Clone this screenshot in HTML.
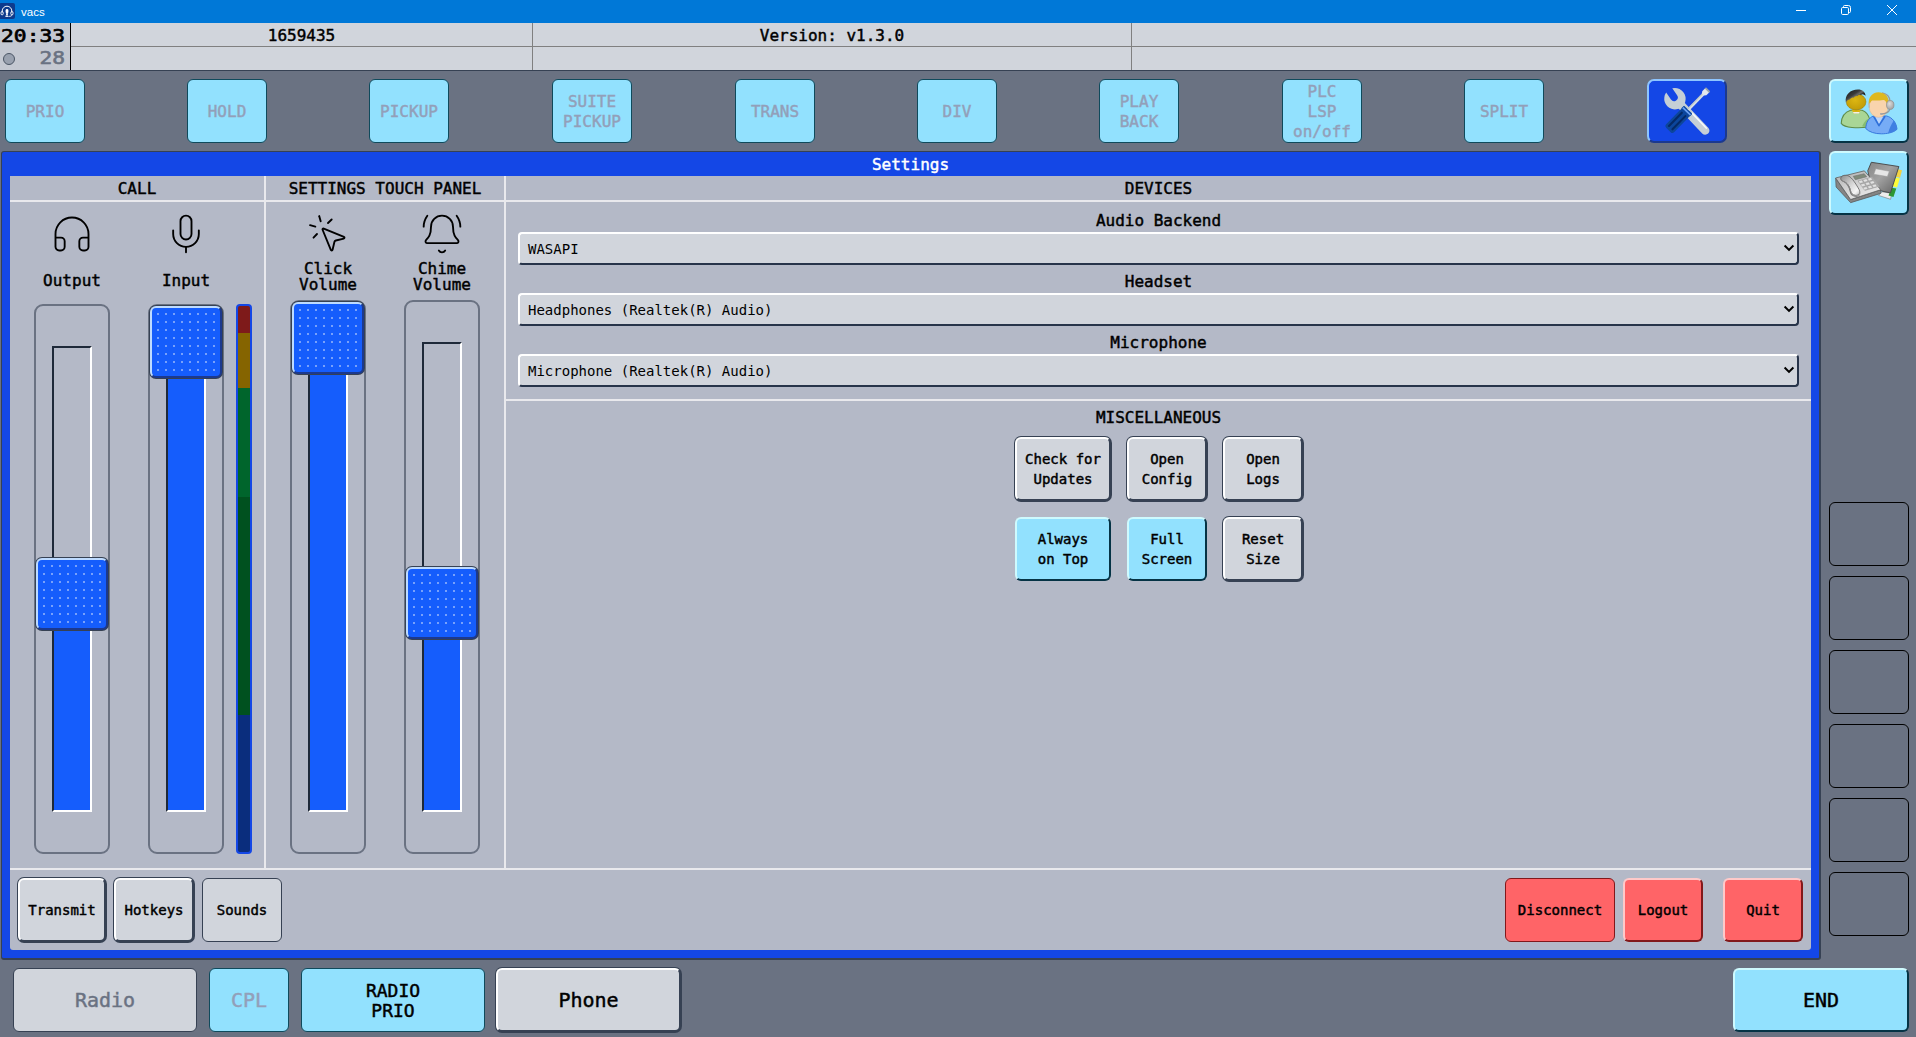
<!DOCTYPE html>
<html lang="en">
<head>
<meta charset="utf-8">
<title>vacs</title>
<style>
*{box-sizing:border-box;margin:0;padding:0}
html,body{width:1916px;height:1037px;overflow:hidden}
body{position:relative;background:#6a7282;font-family:"DejaVu Sans Mono","Liberation Mono",monospace;font-size:16px;color:#000;line-height:1.25}
.abs{position:absolute}
.c{padding-top:2px;display:flex;align-items:center;justify-content:center;text-align:center}
/* title bar */
#tb{left:0;top:0;width:1916px;height:23px;background:#0078d7}
#tb .t{left:21px;top:5px;font:11.500px/15px "Liberation Sans",sans-serif;color:#fff}
/* info bar */
#info{left:0;top:23px;width:1916px;height:48px;background:#d1d5dc;border-bottom:1px solid #364153}
#clock{left:0;top:0;width:70px;height:47px;background:#c4c8d1}
.ln{background:#808080}
/* flat buttons */
.sb,.btn,.sm,.hd{-webkit-text-stroke:.45px}
.btn{border-radius:6px;font-size:16px;line-height:20px}
.cy{background:#92e1fe;border:1px solid #0f4a5c}
.gy{background:#d1d5dc;border:1px solid #364153}
.dis{color:#939fb9}
/* 3d buttons */
.b3{border-radius:7px;background:#364153;padding:1px}
.b3>i{padding-top:2px;display:flex;align-items:center;justify-content:center;text-align:center;width:100%;height:100%;border-radius:6px;border:2px solid;border-color:#fff #364153 #364153 #fff;background:#d1d5dc;font-style:normal}
.c3{border-radius:6px;border:2px solid;border-color:#cefafe #053345 #053345 #cefafe;background:#92e1fe}
.sm{font-size:14px;line-height:20px}
.sm.c,.sm>i{padding-top:0}
/* panel */
#pn{left:1px;top:151px;width:1820px;height:809px;background:#1447e6;border-radius:3px;border:solid #364153;border-width:1px 2px 2px 1px}
#in{left:10px;top:176px;width:1801px;height:774px;background:#b4b9c7;border-radius:0 0 3px 3px}
.hl{background:#e9e9ed}
.hd{font-size:16px;line-height:24px;text-align:center;height:24px}
.sel{height:33px;border-radius:4px;border:2px solid;border-color:#fff #27344a #27344a #fff;background:#d1d5dc;font-size:14px;line-height:31px;padding-left:8px;text-align:left}
/* sliders */
.sc{width:76px;border:2px solid #6a7282;border-radius:9px}
.tr{width:40px;border:2px solid;border-color:#1e2939 #fff #fff #1e2939}
.fl{background:#155dfc}
.th{width:74px;height:74px;border-radius:7px;background:#364153;padding:1px}
.th>i{display:block;width:72px;height:72px;border-radius:6px;border:2px solid;border-color:#bedbff #1c398e #1c398e #bedbff;background-color:#155dfc;background-image:radial-gradient(circle,#78a1fb 0,#78a1fb 1px,transparent 1.3px);background-size:8px 8px;background-position:2px 2px}
.slot{width:80px;height:64px;left:1829px;border:1px solid #000;border-radius:6px}
.rd{background:#ff6467}
</style>
</head>
<body>
<!-- TITLEBAR -->
<div id="tb" class="abs">
<svg class="abs" style="left:-1px;top:3px" width="16" height="16" viewBox="0 0 16 16"><rect x="0" y="0" width="16" height="16" rx="2" fill="#0d3a8c"/><path d="M3.2 9.5V8a4.8 4.8 0 0 1 9.6 0v1.5" fill="none" stroke="#fff" stroke-width="1"/><rect x="2" y="8.6" width="2.2" height="3.2" rx="1" fill="none" stroke="#fff" stroke-width="0.9"/><rect x="11.8" y="8.6" width="2.2" height="3.2" rx="1" fill="none" stroke="#fff" stroke-width="0.9"/><path d="M12.9 11.8c0 1.2-1 1.6-3.6 1.6" fill="none" stroke="#fff" stroke-width="0.8"/><rect x="6.6" y="6" width="2.8" height="4.4" rx="1.4" fill="#fff"/><path d="M6.9 10.2h2.2l-.4 2.2H7.3z" fill="#fff"/><rect x="6.4" y="12.6" width="2.6" height="1.4" fill="#dfe6f5"/></svg>
<div class="abs t">vacs</div>
<svg class="abs" style="left:1790px;top:0" width="120" height="23" viewBox="0 0 120 23" fill="none" stroke="#fff" stroke-width="1"><path d="M6 10.5h10"/><rect x="51.500" y="7.500" width="7" height="7" rx="1.200"/><path d="M53.500 7V6.500q0-1 1-1H58.500q2 0 2 2V11.500q0 1-1 1H59"/><path d="M97 5l10 10M107 5l-10 10"/></svg>
</div>
<!-- INFOBAR -->
<div id="info" class="abs">
<div id="clock" class="abs"></div>
<div class="abs" style="left:0;top:0.5px;width:65px;height:24px;font-size:18px;line-height:24px;-webkit-text-stroke:.7px;text-align:right;transform:scaleX(1.18);transform-origin:100% 50%">20:33</div>
<div class="abs" style="left:3px;top:30px;width:12px;height:12px;border-radius:50%;background:#99a1af;border:1px solid #4a5565"></div>
<div class="abs" style="left:0;top:23.4px;width:65px;height:24px;font-size:18px;line-height:24px;-webkit-text-stroke:.6px;text-align:right;color:#6a7282;transform:scaleX(1.18);transform-origin:100% 50%">28</div>
<div class="abs" style="left:70px;top:0;width:1px;height:47px;background:#000"></div>
<div class="abs ln" style="left:71px;top:23px;width:1845px;height:1px"></div>
<div class="abs ln" style="left:532px;top:0;width:1px;height:47px"></div>
<div class="abs ln" style="left:1131px;top:0;width:1px;height:47px"></div>
<div class="abs c" style="left:71px;top:0;width:461px;height:23px" ><span class="sb">1659435</span></div>
<div class="abs c" style="left:533px;top:0;width:598px;height:23px"><span class="sb">Version: v1.3.0</span></div>
</div>
<!-- TOPROW -->
<div class="abs c btn cy dis" style="left:5px;top:79px;width:80px;height:64px">PRIO</div>
<div class="abs c btn cy dis" style="left:187px;top:79px;width:80px;height:64px">HOLD</div>
<div class="abs c btn cy dis" style="left:369px;top:79px;width:80px;height:64px">PICKUP</div>
<div class="abs c btn cy dis" style="left:552px;top:79px;width:80px;height:64px">SUITE<br>PICKUP</div>
<div class="abs c btn cy dis" style="left:735px;top:79px;width:80px;height:64px">TRANS</div>
<div class="abs c btn cy dis" style="left:917px;top:79px;width:80px;height:64px">DIV</div>
<div class="abs c btn cy dis" style="left:1099px;top:79px;width:80px;height:64px">PLAY<br>BACK</div>
<div class="abs c btn cy dis" style="left:1282px;top:79px;width:80px;height:64px">PLC<br>LSP<br>on/off</div>
<div class="abs c btn cy dis" style="left:1464px;top:79px;width:80px;height:64px">SPLIT</div>
<div class="abs" id="setbtn" style="left:1647px;top:79px;width:80px;height:64px;border-radius:7px;border:2px solid;border-color:#8ec5ff #1c398e #1c398e #8ec5ff;background:#1447e6"></div>
<svg class="abs" style="left:1647px;top:79px" width="80" height="64" viewBox="0 0 80 64">
<g transform="translate(27.900 19.700) rotate(-43.600)">
<path d="M-4.200 9 L-4.200 44 A4.200 4.200 0 0 0 4.200 44 L4.200 9 Z" fill="#c5cfd6"/>
<path d="M1.700 22 L1.700 43.500 A1.200 1.200 0 0 0 3.300 43.500 L3.300 22 Z" fill="#f6f9fb"/>
<path transform="rotate(9)" d="M-3.700 -10 A10.700 10.700 0 1 0 3.700 -10 L3.700 -1.500 A3.700 3.700 0 0 1 -3.700 -1.500 Z" fill="#c5cfd6"/>
</g>
<g transform="translate(21.400 51) rotate(-45.700)">
<rect x="0" y="-5.700" width="25.500" height="11.400" rx="2.600" fill="#0c469c"/>
<rect x="2.300" y="-3.500" width="20.500" height="2.100" rx="1" fill="#052a66"/>
<rect x="2.300" y="1.400" width="20.500" height="2.100" rx="1" fill="#052a66"/>
<rect x="24" y="-5.900" width="4.400" height="11.800" rx=".9" fill="#0c469c"/>
<rect x="25.300" y="-5.300" width="1.700" height="10.600" fill="#6ea3f5"/>
<rect x="28.400" y="-1.400" width="21.500" height="2.800" fill="#d6dfe4"/>
<rect x="28.400" y="-1.400" width="21.500" height=".9" fill="#b0bbc3"/>
<path d="M49.400 -1.400 L51.400 -2.900 L56 -2.900 L56 2.900 L51.400 2.900 L49.400 1.400 Z" fill="#e3e9ed"/>
<rect x="55" y="-2.900" width="1.800" height="5.800" fill="#98a3aa"/>
</g>
</svg>
<!-- PANEL -->
<div id="pn" class="abs"></div>
<div class="abs hd" style="left:2px;top:153px;width:1817px;color:#fff">Settings</div>
<div id="in" class="abs"></div>
<!-- separators -->
<div class="abs hl" style="left:10px;top:200px;width:1801px;height:2px"></div>
<div class="abs hl" style="left:264px;top:176px;width:2px;height:693px"></div>
<div class="abs hl" style="left:504px;top:176px;width:2px;height:693px"></div>
<div class="abs hl" style="left:506px;top:399px;width:1305px;height:2px"></div>
<div class="abs hl" style="left:10px;top:868px;width:1801px;height:2px"></div>
<!-- headers -->
<div class="abs hd" style="left:10px;top:177px;width:254px">CALL</div>
<div class="abs hd" style="left:266px;top:177px;width:238px">SETTINGS TOUCH PANEL</div>
<div class="abs hd" style="left:506px;top:177px;width:1305px">DEVICES</div>
<!-- SLIDERS -->
<div class="abs sc" style="left:34px;top:304px;height:550px"></div>
<div class="abs tr" style="left:52px;top:346px;height:466px"></div>
<div class="abs fl" style="left:54px;top:594px;width:36px;height:216px"></div>
<div class="abs th" style="left:35px;top:557px"><i></i></div>
<div class="abs sc" style="left:148px;top:304px;height:550px"></div>
<div class="abs tr" style="left:166px;top:346px;height:466px"></div>
<div class="abs fl" style="left:168px;top:348px;width:36px;height:462px"></div>
<div class="abs th" style="left:149px;top:305px"><i></i></div>
<div class="abs sc" style="left:290px;top:300px;height:554px"></div>
<div class="abs tr" style="left:308px;top:342px;height:470px"></div>
<div class="abs fl" style="left:310px;top:344px;width:36px;height:466px"></div>
<div class="abs th" style="left:291px;top:301px"><i></i></div>
<div class="abs sc" style="left:404px;top:300px;height:554px"></div>
<div class="abs tr" style="left:422px;top:342px;height:470px"></div>
<div class="abs fl" style="left:424px;top:604px;width:36px;height:206px"></div>
<div class="abs th" style="left:405px;top:566px"><i></i></div>
<div class="abs" style="left:236px;top:304px;width:16px;height:550px;border:2px solid #1447e6;border-radius:4px;background:linear-gradient(#7e1a1a 0,#7e1a1a 27px,#856400 27px,#856400 82px,#00652c 82px,#00652c 191px,#00511f 191px,#00511f 409px,#0a2d7d 409px)"></div>
<svg class="abs" style="left:50px;top:212px" stroke="#000" stroke-width="1.02" fill="none" stroke-linecap="round" stroke-linejoin="round" viewBox="0 0 24 24" width="44" height="44"><path d="M3 14h3a2 2 0 0 1 2 2v3a2 2 0 0 1-2 2H5a2 2 0 0 1-2-2v-7a9 9 0 0 1 18 0v7a2 2 0 0 1-2 2h-1a2 2 0 0 1-2-2v-3a2 2 0 0 1 2-2h3"/></svg>
<svg class="abs" style="left:164px;top:212px" stroke="#000" stroke-width="1.02" fill="none" stroke-linecap="round" stroke-linejoin="round" viewBox="0 0 24 24" width="44" height="44"><path d="M12 2a3 3 0 0 0-3 3v7a3 3 0 0 0 6 0V5a3 3 0 0 0-3-3Z"/><path d="M19 10v2a7 7 0 0 1-14 0v-2"/><path d="M12 19v3"/></svg>
<svg class="abs" style="left:306px;top:212px" stroke="#000" stroke-width="1.02" fill="none" stroke-linecap="round" stroke-linejoin="round" viewBox="0 0 24 24" width="44" height="44"><path d="M14 4.100 12 6"/><path d="m5.100 8-2.900-.8"/><path d="m6 12-1.900 2"/><path d="M7.200 2.200 8 5.100"/><path d="M9.037 9.690a.498.498 0 0 1 .653-.653l11 4.500a.5.500 0 0 1-.074.949l-4.349 1.041a1 1 0 0 0-.74.739l-1.040 4.350a.5.500 0 0 1-.950.074z"/></svg>
<svg class="abs" style="left:420px;top:212px" stroke="#000" stroke-width="1.02" fill="none" stroke-linecap="round" stroke-linejoin="round" viewBox="0 0 24 24" width="44" height="44"><path d="M10.268 21a2 2 0 0 0 3.464 0"/><path d="M22 8c0-2.300-.8-4.300-2-6"/><path d="M3.262 15.326A1 1 0 0 0 4 17h16a1 1 0 0 0 .74-1.673C19.410 13.956 18 12.499 18 8A6 6 0 0 0 6 8c0 4.499-1.411 5.956-2.738 7.326"/><path d="M4 2C2.800 3.700 2 5.700 2 8"/></svg>
<div class="abs hd" style="left:10px;top:269px;width:124px">Output</div>
<div class="abs hd" style="left:124px;top:269px;width:124px">Input</div>
<div class="abs hd" style="left:266px;top:261px;width:124px;line-height:16px;height:32px">Click<br>Volume</div>
<div class="abs hd" style="left:380px;top:261px;width:124px;line-height:16px;height:32px">Chime<br>Volume</div>
<!-- DEVICES -->
<div class="abs hd" style="left:506px;top:209px;width:1305px">Audio Backend</div>
<div class="abs sel" style="left:518px;top:232px;width:1281px">WASAPI</div>
<div class="abs hd" style="left:506px;top:270px;width:1305px">Headset</div>
<div class="abs sel" style="left:518px;top:293px;width:1281px">Headphones (Realtek(R) Audio)</div>
<div class="abs hd" style="left:506px;top:331px;width:1305px">Microphone</div>
<div class="abs sel" style="left:518px;top:354px;width:1281px">Microphone (Realtek(R) Audio)</div>
<svg class="abs" style="left:1783px;top:243px" width="12" height="10" viewBox="0 0 12 10" fill="none" stroke="#000" stroke-width="2"><path d="M1.600 2.500 6 6.900 10.400 2.500"/></svg>
<svg class="abs" style="left:1783px;top:304px" width="12" height="10" viewBox="0 0 12 10" fill="none" stroke="#000" stroke-width="2"><path d="M1.600 2.500 6 6.900 10.400 2.500"/></svg>
<svg class="abs" style="left:1783px;top:365px" width="12" height="10" viewBox="0 0 12 10" fill="none" stroke="#000" stroke-width="2"><path d="M1.600 2.500 6 6.900 10.400 2.500"/></svg>
<div class="abs hd" style="left:506px;top:406px;width:1305px">MISCELLANEOUS</div>
<div class="abs b3 sm" style="left:1014px;top:436px;width:98px;height:66px"><i>Check for<br>Updates</i></div>
<div class="abs b3 sm" style="left:1126px;top:436px;width:82px;height:66px"><i>Open<br>Config</i></div>
<div class="abs b3 sm" style="left:1222px;top:436px;width:82px;height:66px"><i>Open<br>Logs</i></div>
<div class="abs c c3 sm" style="left:1015px;top:517px;width:96px;height:64px">Always<br>on Top</div>
<div class="abs c c3 sm" style="left:1127px;top:517px;width:80px;height:64px">Full<br>Screen</div>
<div class="abs b3 sm" style="left:1222px;top:516px;width:82px;height:66px"><i>Reset<br>Size</i></div>
<!-- footer buttons -->
<div class="abs b3 sm" style="left:17px;top:877px;width:90px;height:66px"><i>Transmit</i></div>
<div class="abs b3 sm" style="left:113px;top:877px;width:82px;height:66px"><i>Hotkeys</i></div>
<div class="abs c btn gy sm" style="left:202px;top:878px;width:80px;height:64px">Sounds</div>
<div class="abs c sm rd" style="left:1505px;top:878px;width:110px;height:64px;border-radius:6px;border:1px solid #82181a">Disconnect</div>
<div class="abs c sm rd" style="left:1623px;top:878px;width:80px;height:64px;border-radius:6px;border:2px solid;border-color:#ffc9c9 #82181a #82181a #ffc9c9">Logout</div>
<div class="abs c sm rd" style="left:1723px;top:878px;width:80px;height:64px;border-radius:6px;border:2px solid;border-color:#ffc9c9 #82181a #82181a #ffc9c9">Quit</div>
<!-- RIGHTCOL -->
<div class="abs c3" id="usr" style="left:1829px;top:79px;width:80px;height:64px"></div>
<div class="abs c3" id="phn" style="left:1829px;top:151px;width:80px;height:64px"></div>
<div class="abs slot" style="top:502px"></div>
<div class="abs slot" style="top:576px"></div>
<div class="abs slot" style="top:650px"></div>
<div class="abs slot" style="top:724px"></div>
<div class="abs slot" style="top:798px"></div>
<div class="abs slot" style="top:872px"></div>
<!-- USERS -->
<svg class="abs" style="left:1829px;top:79px" width="80" height="64" viewBox="0 0 80 64">
<defs>
<radialGradient id="hd1" cx=".45" cy=".4" r=".7"><stop offset="0" stop-color="#dcb612"/><stop offset="1" stop-color="#bd9806"/></radialGradient>
<linearGradient id="hr1" x1="0" y1="0" x2="1" y2="1"><stop offset="0" stop-color="#161616"/><stop offset=".38" stop-color="#3a3a3a"/><stop offset=".5" stop-color="#6a6a6a"/><stop offset=".62" stop-color="#1e1e1e"/><stop offset="1" stop-color="#222"/></linearGradient>
<radialGradient id="ear" cx=".4" cy=".35" r=".75"><stop offset="0" stop-color="#dcdcdc"/><stop offset="1" stop-color="#9c9c9c"/></radialGradient>
</defs>
<path d="M12.21 44.40C12.49 37.97 15.92 32.98 21.63 31.19L33.05 31.19C37.33 32.62 39.83 36.55 40.76 40.83L38.76 48.32C33.05 48.82 27.34 48.82 23.05 48.54C18.06 48.11 14.13 46.90 12.21 44.40Z" fill="#a9d696" stroke="#5f8c48" stroke-width="1.1"/>
<path d="M40.76 40.83C38.76 38.69 36.62 40.83 33.05 47.25L35.90 48.32L38.76 48.32Z" fill="#86bd72"/>
<path d="M22.70 30.84L31.62 30.84L30.19 34.26L24.48 34.26Z" fill="#d9b312"/>
<path d="M23.91 32.98L30.76 32.98L29.84 34.40L24.84 34.40Z" fill="#f4f0e6"/>
<ellipse cx="27.12" cy="22.84" rx="9.85" ry="8.07" fill="url(#hd1)" stroke="#9a7c05" stroke-width=".6"/>
<path d="M16.92 23.55C15.35 15.85 21.48 10.42 28.91 10.42C33.48 10.42 36.33 12.99 36.62 16.85C35.05 15.13 33.19 14.85 31.76 16.13C30.34 15.27 29.19 16.27 28.05 17.13C26.62 16.42 25.55 17.84 24.48 18.70C23.05 17.99 21.77 19.27 20.77 20.56C19.34 20.41 18.06 21.70 16.92 23.55Z" fill="url(#hr1)"/>
<path d="M36.76 49.54C37.04 43.68 39.47 38.83 44.61 36.97L57.46 36.97C63.17 38.12 67.31 43.68 68.02 50.25C64.45 53.82 57.32 54.82 52.32 54.82C45.90 54.82 40.19 53.10 36.76 49.54Z" fill="#76acf6" stroke="#2f70da" stroke-width=".9"/>
<path d="M64.81 41.54C66.95 44.40 67.74 47.25 68.02 50.25C65.88 52.25 62.67 53.53 59.10 54.25C60.17 49.39 62.67 45.11 64.81 41.54Z" fill="#3f7fe2"/>
<path d="M46.25 37.83L53.89 37.83L49.96 45.47Z" fill="#bcd5f9"/>
<path d="M44.61 37.26L49.96 46.68L56.03 37.26" fill="none" stroke="#2f70da" stroke-width="1.600" stroke-linejoin="round"/>
<ellipse cx="49.61" cy="27.62" rx="9.49" ry="10.71" fill="#f9d4ad" stroke="#dcb48c" stroke-width=".5"/>
<path d="M53.03 13.85C57.67 14.78 60.89 17.99 61.03 22.27" fill="none" stroke="#9a9a9a" stroke-width="1.200"/>
<path d="M39.83 25.84C38.76 18.70 43.04 13.13 49.46 13.13C55.17 13.13 59.10 16.56 59.81 22.27C59.10 23.34 58.39 23.70 57.67 24.41C56.96 22.27 55.89 21.20 54.46 20.99C50.18 21.70 45.90 21.70 43.04 21.41C41.61 22.63 40.76 24.41 39.83 25.84Z" fill="#deb820"/>
<path d="M39.33 23.70L40.47 23.70L41.04 28.69L39.61 28.69Z" fill="#b8b8b8"/>
<path d="M60.89 30.26C59.81 33.33 56.60 34.76 51.96 34.98" fill="none" stroke="#9a9a9a" stroke-width="1.300"/>
<rect x="51.03" y="34.05" width="2.600" height="1.800" rx=".5" fill="#a8a8a8"/>
<ellipse cx="61.24" cy="25.98" rx="3.71" ry="4.43" fill="url(#ear)" stroke="#8c8c8c" stroke-width=".7"/>
</svg>
<!-- /USERS -->
<!-- PHONE -->
<svg class="abs" style="left:1829px;top:151px" width="80" height="64" viewBox="0 0 80 64">
<defs>
<linearGradient id="bk" x1="0" y1="0" x2="1" y2="1"><stop offset="0" stop-color="#858585"/><stop offset=".45" stop-color="#a2a2a2"/><stop offset="1" stop-color="#5f5f5f"/></linearGradient>
<linearGradient id="pt" x1="0" y1="0" x2=".6" y2="1"><stop offset="0" stop-color="#a9a9a9"/><stop offset=".5" stop-color="#cfcfcf"/><stop offset="1" stop-color="#e9e9e9"/></linearGradient>
<linearGradient id="hs" x1="0" y1="0" x2="1" y2="1"><stop offset="0" stop-color="#8a8a8a"/><stop offset=".45" stop-color="#cfcfcf"/><stop offset=".8" stop-color="#f6f6f6"/><stop offset="1" stop-color="#bdbdbd"/></linearGradient>
</defs>
<path d="M49.46 44.40L61.60 48.32L62.67 42.26L53.03 40.83Z" fill="#ededed" stroke="#777" stroke-width=".6"/>
<path d="M68.74 18.13L73.02 19.13L71.02 26.70L66.74 25.70Z" fill="#f3d243"/>
<path d="M66.74 26.55L70.88 27.41L68.02 36.40L63.38 35.26Z" fill="#fdfd38"/>
<path d="M62.67 36.69L67.31 37.54L64.45 45.97L59.46 44.54Z" fill="#2d9632"/>
<path d="M42.33 11.28L69.88 15.56L61.46 41.90L43.04 37.97L38.76 19.77Z" fill="url(#bk)" stroke="#444" stroke-width=".9" stroke-linejoin="round"/>
<path d="M46.75 17.70L60.31 20.27L58.39 25.55L44.83 23.27Z" fill="#e6e6e6" stroke="#9a9a9a" stroke-width=".5"/>
<path d="M6.64 27.12L7.07 35.97L21.63 51.68L51.75 42.40L51.61 38.83L21.63 48.54Z" fill="#858585" stroke="#555" stroke-width=".7" stroke-linejoin="round"/>
<path d="M6.64 26.98L35.33 19.84L51.75 38.69L21.63 48.54Z" fill="url(#pt)" stroke="#5e5e5e" stroke-width=".8" stroke-linejoin="round"/>
<path d="M24.20 25.27L35.19 22.70L37.76 25.84L26.34 28.69Z" fill="#7f8a7a" stroke="#6a6a6a" stroke-width=".5"/>
<path d="M28.48 29.84L43.04 25.70L50.61 35.55L36.05 39.83Z" fill="#a9a9a9"/>
<g fill="#e2e2e2" stroke="#8c8c8c" stroke-width=".35">
<path d="M29.19 30.12L32.83 29.05L34.48 31.41L30.84 32.48Z"/><path d="M33.76 28.84L37.40 27.77L39.04 30.12L35.40 31.19Z"/><path d="M38.33 27.55L41.97 26.48L43.61 28.84L39.97 29.91Z"/><path d="M31.48 33.40L35.12 32.33L36.76 34.69L33.12 35.76Z"/><path d="M36.05 32.12L39.69 31.05L41.33 33.40L37.69 34.48Z"/><path d="M40.61 30.84L44.25 29.76L45.90 32.12L42.26 33.19Z"/><path d="M33.76 36.69L37.40 35.62L39.04 37.97L35.40 39.04Z"/><path d="M38.33 35.40L41.97 34.33L43.61 36.69L39.97 37.76Z"/><path d="M42.90 34.12L46.54 33.05L48.18 35.40L44.54 36.47Z"/>
</g>
<path d="M14.49 30.84C18.06 31.91 21.06 36.19 21.98 40.83C22.48 43.33 24.48 45.47 27.69 45.11C30.19 44.83 31.62 42.97 31.26 40.83C31.98 43.68 30.19 46.18 26.62 45.97C23.05 45.68 21.27 43.68 20.77 40.83C19.84 36.19 17.70 32.98 14.49 30.84Z" fill="#7a7a7a"/>
<path d="M11.78 26.98C12.35 24.41 16.63 23.34 19.84 25.12C23.05 26.91 26.62 32.26 30.19 38.69C31.62 41.54 30.19 44.40 26.62 44.40C23.77 44.40 21.98 42.26 21.63 40.11C20.56 35.12 18.06 31.55 14.49 30.48C12.35 29.76 11.49 28.69 11.78 26.98Z" fill="url(#hs)" stroke="#5e5e5e" stroke-width=".8"/>
<path d="M14.49 30.48C18.06 31.55 20.56 35.12 21.63 40.11C21.98 42.26 23.77 44.40 26.62 44.40" fill="none" stroke="#8a8a8a" stroke-width=".9"/>
</svg>
<!-- /PHONE -->
<!-- BOTTOM -->
<div class="abs c btn gy" style="left:13px;top:968px;width:184px;height:64px;font-size:20px;padding-top:0;color:#6a7282">Radio</div>
<div class="abs c btn cy dis" style="left:209px;top:968px;width:80px;height:64px;font-size:20px;padding-top:0">CPL</div>
<div class="abs c btn cy" style="left:301px;top:968px;width:184px;height:64px;font-size:18px;line-height:20px">RADIO<br>PRIO</div>
<div class="abs b3 btn" style="left:495px;top:967px;width:187px;height:66px;font-size:20px;border-radius:7px"><i style="padding-top:0">Phone</i></div>
<div class="abs c btn c3" style="left:1733px;top:968px;width:176px;height:64px;font-size:20px;padding-top:0">END</div>
</body>
</html>
